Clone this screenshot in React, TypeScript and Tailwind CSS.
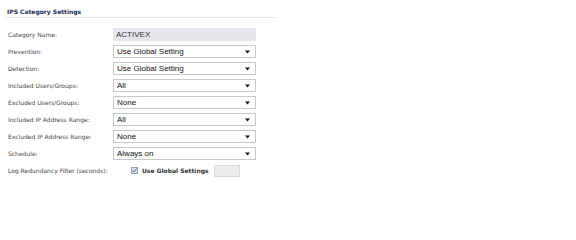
const rows: { label: string; value: string; kind: 'text' | 'select' }[] = [
  { label: 'Category Name:', value: 'ACTIVEX', kind: 'text' },
  { label: 'Prevention:', value: 'Use Global Setting', kind: 'select' },
  { label: 'Detection:', value: 'Use Global Setting', kind: 'select' },
  { label: 'Included Users/Groups:', value: 'All', kind: 'select' },
  { label: 'Excluded Users/Groups:', value: 'None', kind: 'select' },
  { label: 'Included IP Address Range:', value: 'All', kind: 'select' },
  { label: 'Excluded IP Address Range:', value: 'None', kind: 'select' },
  { label: 'Schedule:', value: 'Always on', kind: 'select' },
]

function Arrow() {
  return (
    <svg width="5" height="4" viewBox="0 0 5 4" className="shrink-0">
      <path d="M0 0.5h5L2.5 3.5z" fill="#111" />
    </svg>
  )
}

export default function App() {
  return (
    <div className="h-[208px] w-[576px] bg-white pt-[8px] pl-[5px] font-['DejaVu_Sans',sans-serif]">
      <div className="w-[271px] border-b border-[#e6e6e6] pb-[1px] pl-[2px] text-[6px] leading-[8px] font-bold text-[#1c2c5c]">
        IPS Category Settings
      </div>
      <div className="mt-[10px] flex flex-col gap-[4px]">
        {rows.map((r) => (
          <div key={r.label} className="flex h-[13px] items-center">
            <span className="w-[108px] pl-[3px] text-[6px] text-[#444]">{r.label}</span>
            {r.kind === 'text' ? (
              <div className="flex h-[13px] w-[143px] items-center bg-[#e6e6ec] pl-[3px] font-['Liberation_Sans',sans-serif] text-[8px] text-[#333]">
                {r.value}
              </div>
            ) : (
              <div className="flex h-[13px] w-[143px] items-center justify-between border border-[#c8c8c8] bg-white pr-[5px] pl-[3px] font-['Liberation_Sans',sans-serif] text-[8px] text-[#111]">
                <span>{r.value}</span>
                <Arrow />
              </div>
            )}
          </div>
        ))}
        <div className="flex h-[13px] items-center">
          <span className="w-[126px] pl-[3px] text-[6px] text-[#444]">Log Redundancy Filter (seconds):</span>
          <span className="flex h-[7px] w-[7px] items-center justify-center border border-[#9aa0b8] bg-[#dde0ec]">
            <svg width="5" height="5" viewBox="0 0 5 5">
              <path d="M0.5 2.5l1.3 1.6L4.5 0.5" stroke="#4a5a9a" strokeWidth="0.9" fill="none" />
            </svg>
          </span>
          <span className="ml-[4px] w-[72px] text-[6px] font-bold text-[#333]">Use Global Settings</span>
          <div className="h-[12px] w-[26px] border border-[#d8d8d8] bg-[#ededf0]" />
        </div>
      </div>
    </div>
  )
}
